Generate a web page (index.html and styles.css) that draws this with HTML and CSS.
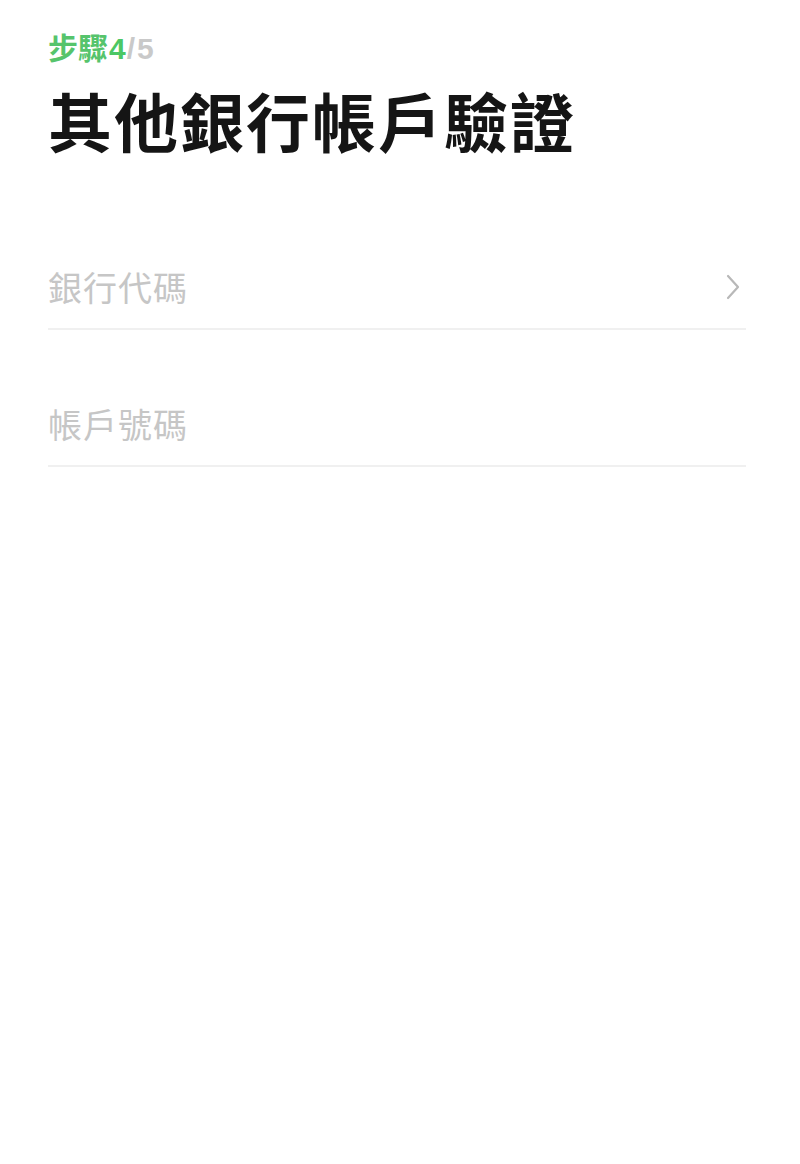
FILE: index.html
```html
<!DOCTYPE html>
<html lang="zh-Hant">
<head>
<meta charset="utf-8">
<title>其他銀行帳戶驗證</title>
<link rel="stylesheet" href="styles.css">
</head>
<body>
<main class="page">
  <div class="step"><span class="step-current">步驟</span><span class="step-num">4</span><span class="step-total">/5</span></div>
  <h1 class="title">其他銀行帳戶驗證</h1>
  <div class="form">
    <div class="field">
      <span class="placeholder">銀行代碼</span>
      <svg class="chevron" width="16" height="26" viewBox="0 0 16 26" aria-hidden="true">
        <path d="M3 2 L13 13 L3 24" fill="none" stroke="#b8b8b8" stroke-width="2.2" stroke-linecap="round" stroke-linejoin="round"/>
      </svg>
    </div>
    <div class="field">
      <span class="placeholder">帳戶號碼</span>
    </div>
  </div>
</main>
</body>
</html>
```
FILE: styles.css
```css
html, body {
  margin: 0;
  padding: 0;
  background: #ffffff;
}
body {
  font-family: "Noto Sans CJK TC", "Noto Sans", sans-serif;
}
.page {
  padding: 28px 54px 0 48px;
}
.step {
  font-size: 30px;
  line-height: 36px;
  font-weight: 700;
}
.step-current {
  color: #56c46c;
}
.step-num {
  color: #4cc764;
  font-family: "Liberation Sans", sans-serif;
  font-weight: 700;
  font-size: 30px;
  margin-left: 1px;
  letter-spacing: 1px;
}
.step-total {
  color: #c9c9c9;
  font-family: "Liberation Sans", sans-serif;
  font-weight: 700;
  font-size: 30px;
  letter-spacing: 2px;
}
.title {
  margin: 12px 0 0 0;
  font-size: 64px;
  line-height: 80px;
  font-weight: 700;
  color: #151515;
  letter-spacing: 2px;
}
.form {
  margin-top: 34px;
}
.field {
  display: flex;
  align-items: center;
  justify-content: space-between;
  padding: 72px 0 19px 0;
  border-bottom: 2px solid #f0f0f0;
}
.placeholder {
  font-size: 34px;
  line-height: 44px;
  color: #c6c6c6;
  font-weight: 400;
  letter-spacing: 1px;
}
.chevron {
  display: block;
  margin-right: 5px;
}
```
